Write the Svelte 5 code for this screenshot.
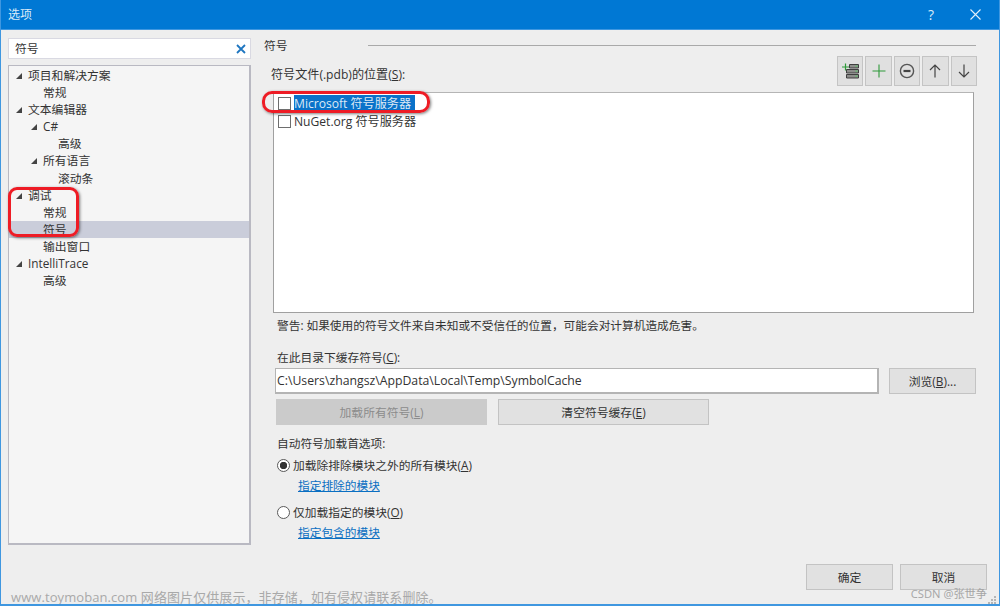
<script>
  const tree = [
    { label: "项目和解决方案", level: 0, open: true },
    { label: "常规", level: 1 },
    { label: "文本编辑器", level: 0, open: true },
    { label: "C#", level: 1, open: true },
    { label: "高级", level: 2 },
    { label: "所有语言", level: 1, open: true },
    { label: "滚动条", level: 2 },
    { label: "调试", level: 0, open: true },
    { label: "常规", level: 1 },
    { label: "符号", level: 1, selected: true },
    { label: "输出窗口", level: 1 },
    { label: "IntelliTrace", level: 0, open: true },
    { label: "高级", level: 1 }
  ];
</script>

<div class="window">
  <header class="titlebar">
    <span class="title">选项</span>
    <span class="help">?</span>
    <svg class="close" width="11" height="11" viewBox="0 0 11 11">
      <path d="M0.5 0.5L10.5 10.5M10.5 0.5L0.5 10.5" stroke="#e4f0fa" stroke-width="1.1" fill="none" />
    </svg>
  </header>

  <div class="content">
    <aside class="sidebar">
      <div class="search">
        <span>符号</span>
        <svg width="10" height="10" viewBox="0 0 10 10">
          <path d="M1 1L9 9M9 1L1 9" stroke="#1e76c0" stroke-width="1.8" fill="none" />
        </svg>
      </div>
      <div class="tree">
        {#each tree as node}
          <div class="node level{node.level}" class:selected={node.selected}>
            {#if node.open}<i class="arrow"></i>{/if}
            <span>{node.label}</span>
          </div>
        {/each}
      </div>
    </aside>

    <main class="panel">
      <div class="heading">
        <span>符号</span>
        <div class="rule"></div>
      </div>

      <div class="locations">
        <span class="loc-label">符号文件(.pdb)的位置(<u>S</u>):</span>
        <div class="toolbar">
          <button class="tool" aria-label="添加服务器">
            <svg width="18" height="16" viewBox="0 0 18 16">
              <path d="M8.5 1.5h9v3.5h-9zM5.5 6.5h12V10h-12zM5.5 11.5h12V15h-12z" fill="#8d8d8b" stroke="#3f3f3f" stroke-width="1" />
              <path d="M1 4H8M4.5 0.5V7.5" stroke="#2f9a3a" stroke-width="1.2" fill="none" />
              <path d="M14.5 3.2h2M14.5 8.2h2M14.5 13.2h2" stroke="#5fc06c" stroke-width="1.3" />
            </svg>
          </button>
          <button class="tool" aria-label="添加">
            <svg width="14" height="14" viewBox="0 0 14 14">
              <path d="M0.5 7H13.5M7 0.5V13.5" stroke="#2f9a3a" stroke-width="1.1" fill="none" />
            </svg>
          </button>
          <button class="tool" aria-label="删除">
            <svg width="16" height="16" viewBox="0 0 16 16">
              <circle cx="8" cy="8" r="6.6" stroke="#555" stroke-width="1.4" fill="none" />
              <path d="M4.5 8H11.5" stroke="#444" stroke-width="2.2" />
            </svg>
          </button>
          <button class="tool" aria-label="上移">
            <svg width="12" height="14" viewBox="0 0 12 14">
              <path d="M6 13.5V1M1 6L6 1L11 6" stroke="#444" stroke-width="1.2" fill="none" />
            </svg>
          </button>
          <button class="tool" aria-label="下移">
            <svg width="12" height="14" viewBox="0 0 12 14">
              <path d="M6 0.5V13M1 8L6 13L11 8" stroke="#444" stroke-width="1.2" fill="none" />
            </svg>
          </button>
        </div>
      </div>

      <div class="list">
        <div class="list-row">
          <i class="check"></i>
          <span class="picked">Microsoft 符号服务器</span>
        </div>
        <div class="list-row">
          <i class="check"></i>
          <span>NuGet.org 符号服务器</span>
        </div>
        <div class="mark mark-server"></div>
      </div>

      <p class="warning">警告: 如果使用的符号文件来自未知或不受信任的位置，可能会对计算机造成危害。</p>

      <label class="cache-label" for="cache">在此目录下缓存符号(<u>C</u>):</label>
      <div class="cache-row">
        <input id="cache" class="path" value="C:\Users\zhangsz\AppData\Local\Temp\SymbolCache" />
        <button class="btn browse">浏览(<u>B</u>)...</button>
      </div>
      <div class="action-row">
        <button class="btn wide disabled">加载所有符号(<u>L</u>)</button>
        <button class="btn wide">清空符号缓存(<u>E</u>)</button>
      </div>

      <p class="auto-label">自动符号加载首选项:</p>
      <div class="radio-row">
        <i class="radio on"></i>
        <span>加载除排除模块之外的所有模块(<u>A</u>)</span>
      </div>
      <a class="link first" href="#exclude">指定排除的模块</a>
      <div class="radio-row second">
        <i class="radio"></i>
        <span>仅加载指定的模块(<u>O</u>)</span>
      </div>
      <a class="link" href="#include">指定包含的模块</a>
    </main>
  </div>

  <footer class="footer">
    <button class="btn foot">确定</button>
    <button class="btn foot">取消</button>
  </footer>

  <div class="mark mark-tree"></div>
  <span class="wm-left">www.toymoban.com 网络图片仅供展示，非存储，如有侵权请联系删除。</span>
  <span class="wm-right">CSDN @张世争</span>
  <svg class="grip" width="10" height="8" viewBox="0 0 10 8">
    <path d="M7 0h2v2H7zM4 3h2v2H4zM7 3h2v2H7zM1 6h2v2H1zM4 6h2v2H4zM7 6h2v2H7z" fill="#b5b5b5" />
  </svg>
</div>

<style>
  :global(body) {
    margin: 0;
  }

  .window {
    position: relative;
    box-sizing: border-box;
    width: 1000px;
    height: 606px;
    display: flex;
    flex-direction: column;
    overflow: hidden;
    background: #eeeeee;
    border: solid #3f97e0;
    border-width: 0 1px 2px;
    color: #333;
    font: 11.8px/17px "Open Sans", "Noto Sans CJK SC", sans-serif;
  }

  .titlebar {
    flex: none;
    height: 29px;
    display: flex;
    align-items: center;
    padding: 0 18px 0 7px;
    background: #0078d4;
    border-bottom: 1px solid #3f97e0;
    color: #dcebf8;
  }

  .title {
    font-size: 12px;
    margin-right: auto;
  }

  .help {
    font-size: 14px;
    margin-right: 36px;
  }

  .content {
    flex: 1;
    min-height: 0;
    display: flex;
    padding: 8px 0 0 7px;
  }

  .sidebar {
    flex: none;
    width: 243px;
    display: flex;
    flex-direction: column;
    gap: 6px;
  }

  .search {
    flex: none;
    box-sizing: border-box;
    height: 21px;
    display: flex;
    align-items: center;
    justify-content: space-between;
    padding: 0 4px 0 6px;
    background: #fff;
    border: 1px solid #d9d9e2;
  }

  .tree {
    box-sizing: border-box;
    height: 480px;
    padding-top: 1px;
    background: #f5f5f5;
    border: 1px solid #b9b9c2;
    border-bottom-width: 2px;
    border-right-width: 2px;
  }

  .node {
    position: relative;
    height: 17.1px;
    line-height: 17px;
    white-space: nowrap;
  }

  .level0 {
    padding-left: 19px;
  }

  .level1 {
    padding-left: 34px;
  }

  .level2 {
    padding-left: 49px;
  }

  .selected {
    background: #cacdda;
  }

  .arrow {
    position: absolute;
    top: 6px;
    width: 0;
    height: 0;
    border-style: solid;
    border-width: 0 0 6px 6px;
    border-color: transparent transparent #444 transparent;
  }

  .level0 .arrow {
    left: 7px;
  }

  .level1 .arrow {
    left: 22px;
  }

  .panel {
    flex: 1;
    min-width: 0;
    display: flex;
    flex-direction: column;
    align-items: flex-start;
    padding: 0 23px 0 22px;
  }

  .heading {
    width: 100%;
    display: flex;
    align-items: center;
    height: 15px;
    margin-left: -9px;
  }

  .rule {
    flex: 1;
    height: 1px;
    margin-left: 80px;
    margin-right: -9px;
    background: #a9a9a9;
  }

  .locations {
    width: 100%;
    position: relative;
    box-sizing: border-box;
    height: 36px;
    margin-top: 3px;
    margin-left: -2px;
    padding-top: 9.5px;
  }

  .loc-label {
    font-size: 12.1px;
    line-height: 17px;
  }

  .toolbar {
    position: absolute;
    right: -3px;
    top: 0;
    display: flex;
    gap: 2px;
  }

  .tool {
    box-sizing: border-box;
    width: 26.4px;
    height: 30px;
    display: flex;
    align-items: center;
    justify-content: center;
    padding: 0;
    background: #e0e0e0;
    border: 1px solid #c4c4c4;
  }

  .list {
    position: relative;
    box-sizing: border-box;
    width: 701px;
    height: 221px;
    padding-top: 1px;
    background: #fff;
    border: 1px solid #a0a0a0;
    border-top-color: #b5b5b5;
  }

  .list-row {
    height: 18.5px;
    display: flex;
    align-items: center;
    gap: 3px;
    padding-left: 4px;
    font-size: 12.1px;
    white-space: nowrap;
  }

  .check {
    flex: none;
    box-sizing: border-box;
    width: 13px;
    height: 13px;
    background: #fff;
    border: 1px solid #6e6e6e;
  }

  .picked {
    padding-right: 4px;
    background: #0a72c9;
    color: #dce9f6;
  }

  .mark {
    position: absolute;
    box-sizing: border-box;
    border: 3px solid #ee1c25;
    box-shadow: 1px 1px 3px rgba(0, 0, 0, 0.5);
    pointer-events: none;
  }

  .mark-server {
    left: -12px;
    top: -2px;
    width: 168px;
    height: 22px;
    border-radius: 10px;
  }

  .mark-tree {
    left: 7px;
    top: 187px;
    width: 71px;
    height: 50px;
    border-radius: 9px;
  }

  .warning {
    margin: 4px 0 0 4px;
    height: 17px;
    font-size: 11.7px;
  }

  .cache-label {
    margin: 15px 0 0 4px;
    height: 17px;
    font-size: 11.75px;
  }

  .cache-row {
    width: 701px;
    display: flex;
    justify-content: space-between;
    align-items: flex-start;
    margin: 2px 0 0 2px;
  }

  .path {
    box-sizing: border-box;
    width: 604px;
    height: 26px;
    padding: 0 1px 0 1px;
    background: #fff;
    border: 1px solid #b4b4b4;
    border-width: 1px 2px 2px 1px;
    color: #333;
    font: inherit;
    font-size: 12.25px;
    outline: none;
  }

  .btn {
    box-sizing: border-box;
    padding: 0;
    background: #e1e1e1;
    border: 1px solid #c3c3c3;
    color: #333;
    font: inherit;
  }

  .browse {
    width: 87px;
    height: 26px;
  }

  .action-row {
    display: flex;
    gap: 11px;
    margin: 5px 0 0 3px;
  }

  .wide {
    width: 211px;
    height: 26px;
  }

  .disabled {
    background: #cbcbcb;
    border-color: #cbcbcb;
    color: #8c8c8c;
  }

  .auto-label {
    margin: 10px 0 0 4px;
    height: 17px;
    font-size: 11.7px;
  }

  .radio-row {
    display: flex;
    align-items: center;
    gap: 3px;
    height: 17px;
    margin: 5px 0 0 4px;
    font-size: 11.75px;
  }

  .second {
    margin-top: 10px;
  }

  .radio {
    box-sizing: border-box;
    width: 13px;
    height: 13px;
    border: 1px solid #5a5a5a;
    border-radius: 50%;
    background: #fff;
  }

  .radio.on {
    background: radial-gradient(circle, #333 0 3.4px, #fff 4px);
  }

  .link {
    margin: 3px 0 0 25px;
    height: 17px;
    color: #0a6fc2;
    font-size: 11.7px;
  }

  .footer {
    position: absolute;
    right: 12px;
    bottom: 14px;
    display: flex;
    gap: 7px;
  }

  .foot {
    width: 87px;
    height: 26px;
  }

  .wm-left {
    position: absolute;
    left: 10px;
    bottom: -2px;
    color: #a9a9a9;
    font-size: 13px;
    letter-spacing: 0.08px;
    white-space: nowrap;
  }

  .wm-right {
    position: absolute;
    right: 12px;
    bottom: 2px;
    color: #a5a5a5;
    font-size: 11.2px;
    white-space: nowrap;
  }

  .grip {
    position: absolute;
    right: 2px;
    bottom: 0;
  }
</style>
